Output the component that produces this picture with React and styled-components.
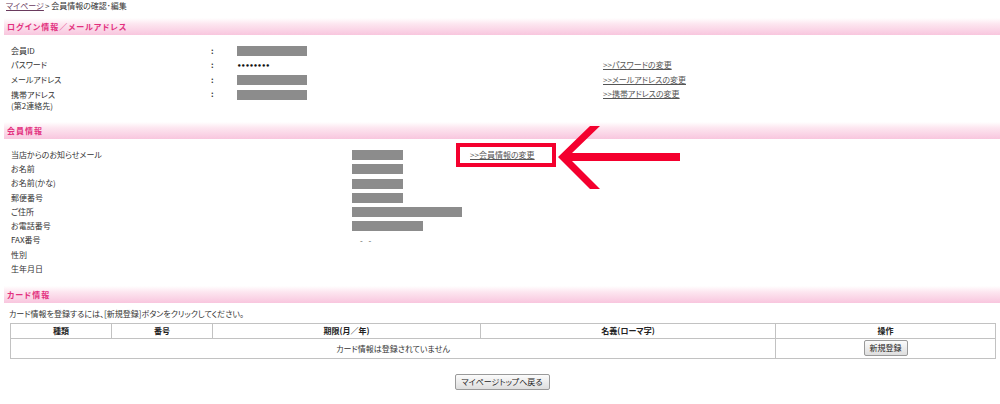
import React from 'react';
import styled, { createGlobalStyle } from 'styled-components';

const Global = createGlobalStyle`
  html, body { margin: 0; padding: 0; background: #fff; }
  body {
    font-family: "Noto Sans CJK JP", "Noto Sans", sans-serif;
    font-size: 8px;
    color: #333;
    font-feature-settings: "palt";
  }
`;

const Page = styled.div`
  width: 1000px;
  box-sizing: border-box;
  padding-left: 4px;
`;

const Breadcrumb = styled.div`
  height: 11px;
  line-height: 11px;
  padding: 0 0 7px 2px;
  color: #333;
`;

const Crumb = styled.a`
  color: #6a3b5e;
  text-decoration: underline;
  margin-right: 1px;
`;

const Band = styled.h2`
  margin: 0;
  height: 17px;
  line-height: 17px;
  padding-left: 3px;
  background: linear-gradient(#fff 0%, #fde6f0 35%, #f8c6de 100%);
  color: #e2307e;
  font-size: 8px;
  font-weight: bold;
  letter-spacing: 1px;
`;

const Section = styled.section`
  padding: ${p => p.$pad};
`;

const LoginGrid = styled.div`
  display: grid;
  grid-template-columns: 200px 26px 366px 1fr;
  grid-auto-rows: minmax(14.5px, auto);
  align-items: start;
`;

const MemberGrid = styled.div`
  display: grid;
  grid-template-columns: 341px 118px 1fr;
  grid-auto-rows: 14.25px;
  align-items: start;
`;

const Label = styled.div`
  line-height: ${p => (p.$multi ? '11px' : p.$lh)};
  padding-top: ${p => (p.$multi ? '1.75px' : '0')};
  color: #333;
`;

const Colon = styled.div`
  line-height: 14.5px;
  font-weight: bold;
`;

const Value = styled.div`
  height: ${p => p.$h};
  display: flex;
  align-items: center;
  padding-left: ${p => p.$indent || '0'};
`;

const Masked = styled.span`
  display: block;
  width: ${p => p.$w}px;
  height: 10px;
  background: #8c8c8c;
`;

const Dots = styled.span`
  font-family: "DejaVu Sans", sans-serif;
  font-size: 7px;
  font-weight: bold;
  letter-spacing: -0.4px;
  color: #111;
`;

const Dash = styled.span`
  color: #555;
  letter-spacing: 2px;
`;

const LinkCell = styled.div`
  line-height: ${p => p.$lh};
`;

const TextLink = styled.a`
  color: #555;
  text-decoration: underline;
  cursor: pointer;
`;

const Highlight = styled.span`
  position: relative;
  display: inline-block;
  line-height: 14.25px;
  &::before {
    content: '';
    position: absolute;
    left: -14px;
    top: -4.875px;
    width: 100px;
    height: 24px;
    border: 4px solid #f4002e;
    box-sizing: border-box;
  }
`;

const Arrow = styled.svg`
  position: absolute;
  left: 88px;
  top: -21.875px;
`;

const Notice = styled.p`
  margin: 0 0 1.7px;
  padding: 4px 0 0 5px;
  line-height: 14px;
`;

const CardTable = styled.table`
  margin: 0 5px 0 6px;
  width: 985px;
  border-collapse: collapse;
  border: 1px solid #aaa;
  table-layout: fixed;
`;

const Col = styled.col`
  width: ${p => p.$w}px;
`;

const Th = styled.th`
  height: 14px;
  padding: 0;
  border: 1px solid #c2c2c2;
  font-weight: bold;
  color: #222;
  text-align: center;
  line-height: 14px;
`;

const Td = styled.td`
  height: 19px;
  padding: 0;
  border: 1px solid #c2c2c2;
  text-align: center;
  color: #333;
`;

const Button = styled.button`
  font-family: "Noto Sans CJK JP", "Noto Sans", sans-serif;
  font-feature-settings: "palt";
  font-size: 8px;
  height: 16px;
  line-height: 14px;
  padding: 0 ${p => p.$px || '6px'};
  border: 1px solid #9a9a9a;
  border-radius: 2px;
  background: linear-gradient(#fbfbfb, #dedede);
  color: #222;
  vertical-align: middle;
`;

const Footer = styled.div`
  text-align: center;
  padding-top: 15px;
`;

const loginRows = [
  { label: '会員ID', value: <Masked $w={70} /> },
  { label: 'パスワード', value: <Dots>••••••••</Dots>, link: '>>パスワードの変更' },
  { label: 'メールアドレス', value: <Masked $w={70} />, link: '>>メールアドレスの変更' },
  { label: ['携帯アドレス', '(第2連絡先)'], value: <Masked $w={70} />, link: '>>携帯アドレスの変更' },
];

const memberRows = [
  { label: '当店からのお知らせメール', w: 51, link: true },
  { label: 'お名前', w: 51 },
  { label: 'お名前(かな)', w: 51 },
  { label: '郵便番号', w: 51 },
  { label: 'ご住所', w: 110 },
  { label: 'お電話番号', w: 71 },
  { label: 'FAX番号', dash: true },
  { label: '性別' },
  { label: '生年月日' },
];

export default function App() {
  return (
    <>
      <Global />
      <Page>
        <Breadcrumb>
          <Crumb>マイページ</Crumb>&gt;&nbsp;会員情報の確認･編集
        </Breadcrumb>

        <Band>ログイン情報／メールアドレス</Band>
        <Section $pad="8.75px 0 11px 7px">
          <LoginGrid>
            {loginRows.map((r, i) => (
              <React.Fragment key={i}>
                {Array.isArray(r.label) ? (
                  <Label $multi>
                    {r.label[0]}
                    <br />
                    {r.label[1]}
                  </Label>
                ) : (
                  <Label $lh="14.5px">{r.label}</Label>
                )}
                <Colon>:</Colon>
                <Value $h="14.5px">{r.value}</Value>
                <LinkCell $lh="14.5px">{r.link && <TextLink>{r.link}</TextLink>}</LinkCell>
              </React.Fragment>
            ))}
          </LoginGrid>
        </Section>

        <Band>会員情報</Band>
        <Section $pad="8.875px 0 10px 7px">
          <MemberGrid>
            {memberRows.map((r, i) => (
              <React.Fragment key={i}>
                <Label $lh="14.25px">{r.label}</Label>
                <Value $h="14.25px" $indent={r.dash ? '8px' : '0'}>
                  {r.w && <Masked $w={r.w} />}
                  {r.dash && <Dash>- -</Dash>}
                </Value>
                <LinkCell $lh="14.25px">
                  {r.link && (
                    <Highlight>
                      <TextLink>&gt;&gt;会員情報の変更</TextLink>
                      <Arrow width="122" height="64" viewBox="0 0 122 64">
                        <polygon
                          points="0,31 32,0 42,0 14,27 122,27 122,35 14,35 42,63 32,63"
                          fill="#f4002e"
                        />
                      </Arrow>
                    </Highlight>
                  )}
                </LinkCell>
              </React.Fragment>
            ))}
          </MemberGrid>
        </Section>

        <Band>カード情報</Band>
        <Notice>カード情報を登録するには、[新規登録]ボタンをクリックしてください。</Notice>
        <CardTable>
          <colgroup>
            <Col $w={101} />
            <Col $w={101} />
            <Col $w={268} />
            <Col $w={295} />
            <Col $w={220} />
          </colgroup>
          <thead>
            <tr>
              <Th>種類</Th>
              <Th>番号</Th>
              <Th>期限(月／年)</Th>
              <Th>名義(ローマ字)</Th>
              <Th>操作</Th>
            </tr>
          </thead>
          <tbody>
            <tr>
              <Td colSpan={4}>カード情報は登録されていません</Td>
              <Td>
                <Button $px="5px">新規登録</Button>
              </Td>
            </tr>
          </tbody>
        </CardTable>

        <Footer>
          <Button>マイページトップへ戻る</Button>
        </Footer>
      </Page>
    </>
  );
}
